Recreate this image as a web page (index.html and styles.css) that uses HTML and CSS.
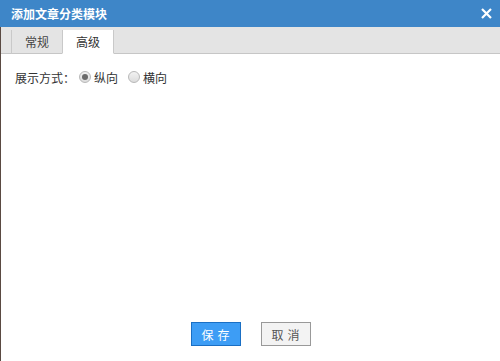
FILE: index.html
```html
<!DOCTYPE html>
<html lang="zh">
<head>
    <meta charset="UTF-8">
    <title>添加文章分类模块</title>
    <link rel="stylesheet" href="styles.css">
</head>
<body>
    <div class="dialog">
        <!-- Titelleiste -->
        <div class="titlebar">
            <span class="title">添加文章分类模块</span>
            <span class="close">
                <svg width="11" height="11" viewBox="0 0 11 11"><path d="M1 1L10 10M10 1L1 10" stroke="#fff" stroke-width="2.2"/></svg>
            </span>
        </div>

        <div class="body">
            <!-- Tabs -->
            <div class="tabs">
                <div class="tab">常规</div>
                <div class="tab active">高级</div>
            </div>

            <div class="panel">
                <div class="row">
                    <span class="label">展示方式：</span>
                    <label class="opt"><span class="radio checked"></span>纵向</label>
                    <label class="opt"><span class="radio"></span>横向</label>
                </div>
            </div>

            <div class="actions">
                <button class="btn save">保存</button>
                <button class="btn cancel">取消</button>
            </div>
        </div>
    </div>
</body>
</html>
```

FILE: styles.css
```css
body {
    margin: 0;
    font-family: "Noto Sans CJK SC", "Liberation Sans", sans-serif;
    font-size: 12px;
    color: #333;
    background: #fff;
}

.dialog {
    width: 500px;
    height: 361px;
    display: flex;
    flex-direction: column;
}

/* Titelleiste */
.titlebar {
    height: 27px;
    background: #3e86c8;
    display: flex;
    align-items: center;
    justify-content: space-between;
    padding: 0 8px 0 11px;
    color: #fff;
}

.title {
    font-weight: bold;
    font-size: 12px;
    line-height: 27px;
}

.close {
    display: flex;
    margin-top: -1px;
}

.body {
    flex: 1;
    display: flex;
    flex-direction: column;
    border-left: 1px solid #5a4a42;
}

/* Tabs */
.tabs {
    height: 26px;
    background: #e4e4e4;
    border-bottom: 1px solid #c6c6c6;
    display: flex;
    align-items: flex-end;
    padding-left: 10px;
}

.tab {
    width: 50px;
    height: 23px;
    line-height: 23px;
    text-align: center;
    color: #444;
    border-left: 1px solid #c9c9c9;
    margin-bottom: -1px;
    border-bottom: 1px solid #c6c6c6;
}

.tab.active {
    background: #fff;
    border-right: 1px solid #c9c9c9;
    border-bottom-color: #fff;
    color: #333;
}

.panel {
    flex: 1;
    padding: 13px 14px;
}

.row {
    display: flex;
    align-items: center;
    height: 20px;
    color: #333;
}

.label {
    margin-right: 4px;
}

.opt {
    display: flex;
    align-items: center;
    margin-right: 10px;
}

.radio {
    width: 12px;
    height: 12px;
    border-radius: 50%;
    border: 1px solid #b8b8b8;
    background: linear-gradient(#f2f2f2, #dcdcdc);
    margin-right: 3px;
    box-sizing: border-box;
    display: flex;
    align-items: center;
    justify-content: center;
}

.radio.checked::after {
    content: "";
    width: 6px;
    height: 6px;
    border-radius: 50%;
    background: #6a6a6a;
}

/* Buttons unten */
.actions {
    display: flex;
    justify-content: center;
    gap: 20px;
    padding-bottom: 15px;
}

.btn {
    width: 50px;
    height: 24px;
    font-family: "Noto Sans CJK SC", sans-serif;
    font-size: 12px;
    letter-spacing: 4px;
    padding: 0 0 0 4px;
    cursor: pointer;
}

.save {
    background: #3d9df5;
    border: 1px solid #1a6fc4;
    color: #fff;
}

.cancel {
    background: #f3f3f3;
    border: 1px solid #999;
    color: #555;
}
```
